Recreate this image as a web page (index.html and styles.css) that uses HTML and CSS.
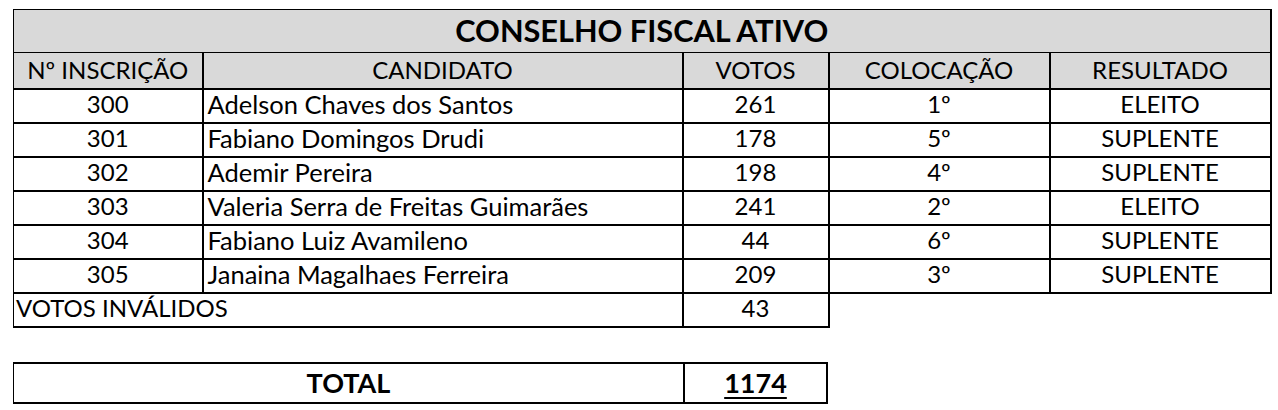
FILE: index.html
```html
<!DOCTYPE html>
<html lang="pt">
<head>
<meta charset="utf-8">
<title>Conselho Fiscal Ativo</title>
<link rel="stylesheet" href="styles.css">
</head>
<body>
<div class="sheet">
  <table class="grid">
    <colgroup>
      <col class="c1"><col class="c2"><col class="c3"><col class="c4"><col class="c5">
    </colgroup>
    <tr class="title"><th colspan="5">CONSELHO FISCAL ATIVO</th></tr>
    <tr class="head">
      <th>Nº INSCRIÇÃO</th><th>CANDIDATO</th><th>VOTOS</th><th>COLOCAÇÃO</th><th>RESULTADO</th>
    </tr>
    <tr class="row"><td>300</td><td class="name">Adelson Chaves dos Santos</td><td>261</td><td>1º</td><td>ELEITO</td></tr>
    <tr class="row"><td>301</td><td class="name">Fabiano Domingos Drudi</td><td>178</td><td>5º</td><td>SUPLENTE</td></tr>
    <tr class="row"><td>302</td><td class="name">Ademir Pereira</td><td>198</td><td>4º</td><td>SUPLENTE</td></tr>
    <tr class="row"><td>303</td><td class="name">Valeria Serra de Freitas Guimarães</td><td>241</td><td>2º</td><td>ELEITO</td></tr>
    <tr class="row"><td>304</td><td class="name">Fabiano Luiz Avamileno</td><td>44</td><td>6º</td><td>SUPLENTE</td></tr>
    <tr class="row"><td>305</td><td class="name">Janaina Magalhaes Ferreira</td><td>209</td><td>3º</td><td>SUPLENTE</td></tr>
    <tr class="row invalid"><td colspan="2" class="label">VOTOS INVÁLIDOS</td><td class="num">43</td><td class="blank" colspan="2"></td></tr>
  </table>
  <table class="total">
    <tr><td class="total-label">TOTAL</td><td class="total-num"><u>1174</u></td></tr>
  </table>
</div>
</body>
</html>
```
FILE: styles.css
```css
html, body {
  margin: 0;
  padding: 0;
  background: #ffffff;
}

.sheet {
  padding: 9px 0 0 13px;
  font-family: "Lato", "Liberation Sans", sans-serif;
  color: #000;
  font-size: 24px;
  line-height: 28px;
}

table {
  border-collapse: collapse;
  table-layout: fixed;
}

.grid {
  width: 1257px;
}

.c1 { width: 189px; }
.c2 { width: 480px; }
.c3 { width: 146px; }
.c4 { width: 221px; }
.c5 { width: 221px; }

th, td {
  padding: 0;
  text-align: center;
  font-weight: normal;
  border: 2px solid #000;
  white-space: nowrap;
  overflow: hidden;
}

.title th {
  background: #d9d9d9;
  font-weight: bold;
  font-size: 30.7px;
  line-height: 34px;
  height: 42px;
  border-top: 1px solid #000;
  border-left: 1px solid #000;
  border-bottom: 1px solid #000;
}

.head th {
  background: #d9d9d9;
  height: 34px;
  padding-bottom: 1px;
  border-top: 1px solid #000;
}

.head th:first-child,
.row td:first-child {
  border-left: 1px solid #000;
}

.row td {
  height: 28px;
  padding-bottom: 4px;
}

.row .name {
  text-align: left;
  padding-left: 4px;
  font-size: 25.5px;
}

.invalid .label {
  text-align: left;
  padding-left: 2px;
}

.invalid .blank {
  border: none;
  border-top: 2px solid #000;
}

.total {
  margin-top: 34px;
  width: 815px;
}

.total td {
  height: 38px;
  font-weight: bold;
  font-size: 27px;
  line-height: 30px;
}

.total .total-label {
  width: 669px;
  border-left: 1px solid #000;
}

.total-num u {
  text-decoration-thickness: 2px;
  text-underline-offset: 4px;
}
```
